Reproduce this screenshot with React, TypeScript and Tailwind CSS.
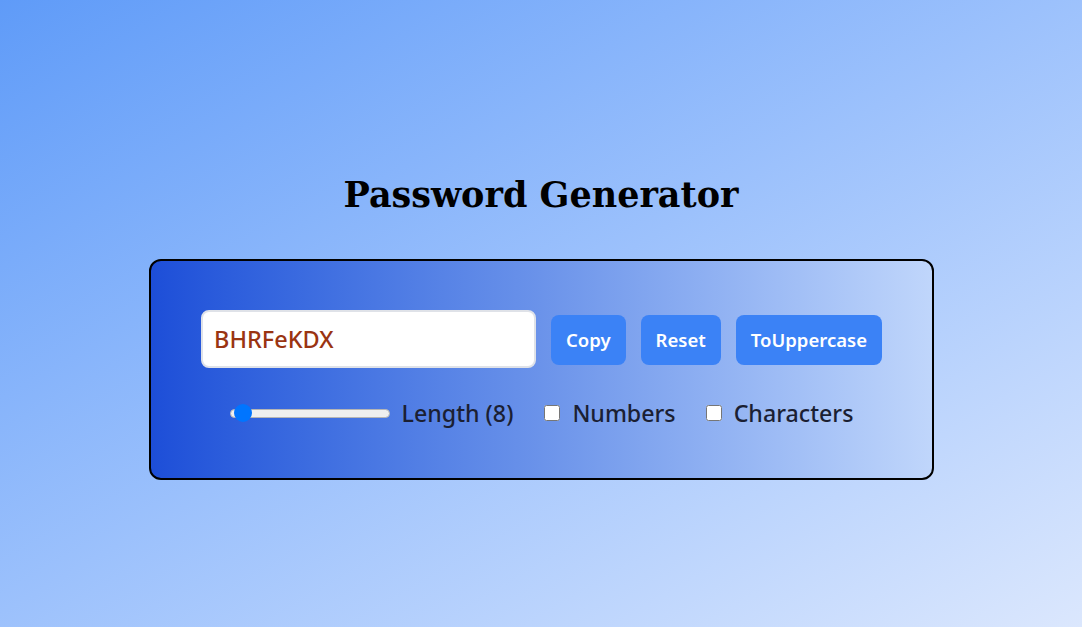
import React, { useState } from "react";

export default function App() {
  const [length] = useState(8);
  return (
    <div className="min-h-screen w-full bg-gradient-to-br from-[#5f9bf8] to-[#dbe7fd] pt-[172px] font-['Noto_Sans',sans-serif]">
      <h1 className="text-center font-['DejaVu_Serif',serif] text-[35px] font-bold leading-[46px] text-black">
        Password Generator
      </h1>
      <div className="mt-[41px] flex justify-center pl-[1px]">
        <div className="w-[785px] rounded-[12px] border-2 border-black bg-gradient-to-r from-[#1d4ed8] via-[#6b93ea] to-[#c0d6fb] pt-[49px] pb-[50px]">
          <div className="flex items-center justify-center gap-[15px]">
            <input
              readOnly
              value="BHRFeKDX"
              className="h-[58px] w-[335px] rounded-[8px] border-2 border-[#dfe2e8] bg-white px-[11px] text-[23.5px] font-medium text-[#9a3412] outline-none font-['Noto_Sans',sans-serif]"
            />
            <button className="mt-[2px] h-[50px] rounded-[8px] bg-[#3b82f6] px-[15px] text-[18.5px] font-semibold text-white">
              Copy
            </button>
            <button className="mt-[2px] h-[50px] rounded-[8px] bg-[#3b82f6] px-[15px] text-[18.5px] font-semibold text-white">
              Reset
            </button>
            <button className="mt-[2px] h-[50px] rounded-[8px] bg-[#3b82f6] px-[15px] text-[18.5px] font-semibold text-white">
              ToUppercase
            </button>
          </div>
          <div className="mt-[30px] flex h-[30px] items-center justify-center text-[23.2px] font-medium text-[#1b1f33]">
            <input
              type="range"
              min={6}
              max={100}
              defaultValue={length}
              className="h-[9px] w-[160px] appearance-none rounded-full border border-[#b5b5b5] bg-[#efefef] [&::-webkit-slider-thumb]:h-[18px] [&::-webkit-slider-thumb]:w-[18px] [&::-webkit-slider-thumb]:appearance-none [&::-webkit-slider-thumb]:rounded-full [&::-webkit-slider-thumb]:bg-[#0075ff]"
            />
            <span className="ml-[12px]">Length ({length})</span>
            <input type="checkbox" className="ml-[31px] h-4 w-4" />
            <span className="ml-[12px]">Numbers</span>
            <input type="checkbox" className="ml-[30px] h-4 w-4" />
            <span className="ml-[12px]">Characters</span>
          </div>
        </div>
      </div>
    </div>
  );
}
